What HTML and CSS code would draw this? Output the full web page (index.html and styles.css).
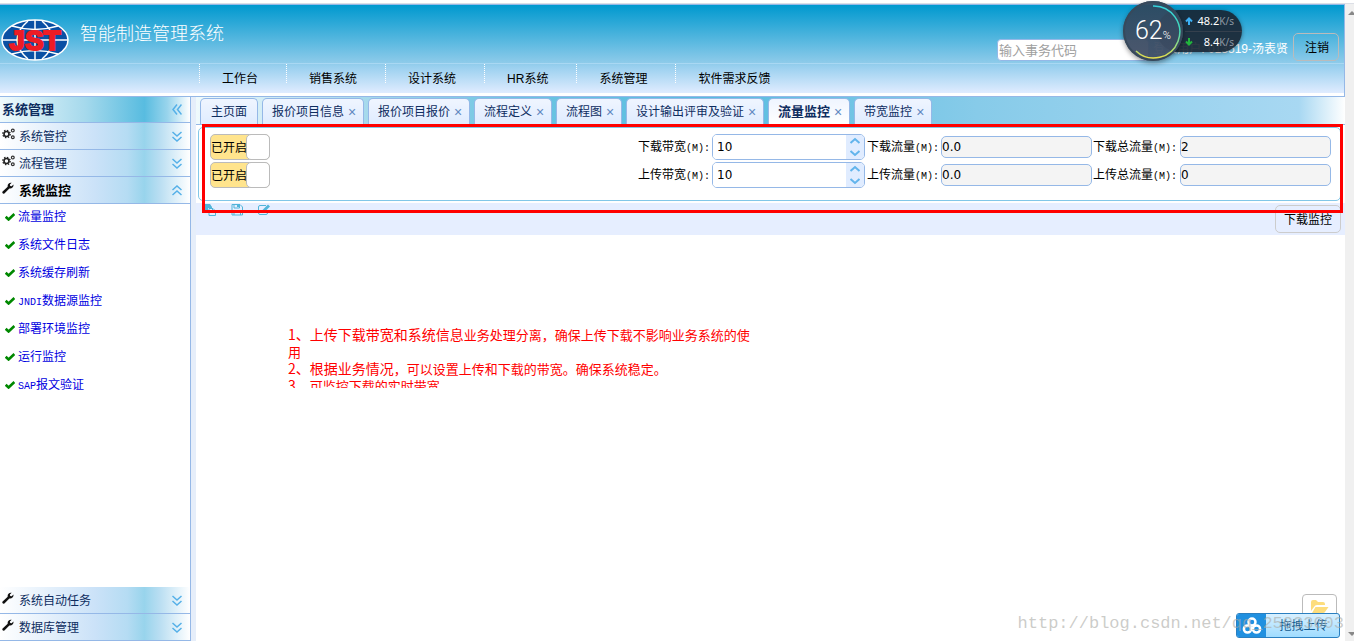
FILE: index.html
```html
<!DOCTYPE html>
<html lang="zh-CN">
<head>
<meta charset="utf-8">
<title>智能制造管理系统</title>
<link rel="stylesheet" href="styles.css">
</head>
<body>
<svg class="defs" width="0" height="0" aria-hidden="true">
  <symbol id="down" viewBox="0 0 10 11"><path d="M0.5 1l4.5 4 4.5-4M0.5 6l4.5 4 4.5-4"/></symbol>
  <symbol id="gears" viewBox="0 0 14 12">
    <circle cx="4.500" cy="6" r="2.500" fill="none" stroke="#222" stroke-width="1.600"/>
    <circle cx="4.500" cy="6" r="3.700" fill="none" stroke="#222" stroke-width="1.300" stroke-dasharray="1.450 1.450"/>
    <circle cx="10.800" cy="2.600" r="1.400" fill="none" stroke="#333" stroke-width="1.200"/>
    <circle cx="10.800" cy="9.200" r="1.400" fill="none" stroke="#333" stroke-width="1.200"/>
  </symbol>
  <symbol id="wrench" viewBox="0 0 12 12"><path fill="#111" d="M.6 9.500L5.700 4.700C5.200 2.300 7 .2 9.700.7L7.900 2.400l.3 1.500 1.500.3 1.700-1.700c.6 2.600-1.600 4.500-4 4L2.400 11.400c-1.300 1-2.800-.7-1.800-1.900z"/></symbol>
  <symbol id="check" viewBox="0 0 10 8"><path d="M.7 3.800l2.900 2.700L9.400 1" fill="none" stroke="#080" stroke-width="2.600"/></symbol>
</svg>
<div class="browser-edge"></div>
<div class="page">
  <div class="app">
    <header class="header">
      <div class="banner">
        <svg class="logo" width="68" height="42" viewBox="0 0 68 42" role="img" aria-label="JST">
          <ellipse cx="34" cy="21" rx="33" ry="20" fill="#0a50a4" stroke="#fff" stroke-width="1.500"/>
          <g fill="none" stroke="#fff" stroke-width="1.500">
            <path d="M34 1v40M1 21h66M11 7q23 7 46 0M11 35q23-7 46 0"/>
            <path d="M27 2Q5 21 27 40M41 2q22 19 0 38"/>
          </g>
          <text class="logo-text" x="34" y="31" text-anchor="middle">JST</text>
        </svg>
        <h1 class="title">智能制造管理系统</h1>
        <div class="account">
          <input class="code" type="text" aria-label="事务代码" placeholder="输入事务代码">
          <span class="user">登录用户: 013519-汤表贤</span>
          <button class="btn logout" type="button">注销</button>
        </div>
      </div>
      <nav class="nav">
        <a href="#">工作台</a><a href="#">销售系统</a><a href="#">设计系统</a><a href="#">HR系统</a><a href="#">系统管理</a><a href="#">软件需求反馈</a>
      </nav>
    </header>
    <div class="body">
      <aside class="sidebar">
        <div class="side-head main-head"><span class="label">系统管理</span><svg class="arrow" width="10" height="11" viewBox="0 0 10 11"><path d="M5 .5l-4 5 4 5M9.500 .5l-4 5 4 5"/></svg></div>
        <div class="side-head"><svg class="ico" width="14" height="12"><use href="#gears"/></svg><span class="label">系统管控</span><svg class="arrow" width="10" height="11"><use href="#down"/></svg></div>
        <div class="side-head"><svg class="ico" width="14" height="12"><use href="#gears"/></svg><span class="label">流程管理</span><svg class="arrow" width="10" height="11"><use href="#down"/></svg></div>
        <div class="side-head open"><svg class="ico" width="14" height="12"><use href="#wrench" width="12"/></svg><span class="label">系统监控</span><svg class="arrow" width="10" height="11" viewBox="0 0 10 11"><path d="M.5 5L5 1l4.500 4M.5 10L5 6l4.500 4"/></svg></div>
        <ul class="links">
          <li><svg width="10" height="8"><use href="#check"/></svg><a href="#">流量监控</a></li>
          <li><svg width="10" height="8"><use href="#check"/></svg><a href="#">系统文件日志</a></li>
          <li><svg width="10" height="8"><use href="#check"/></svg><a href="#">系统缓存刷新</a></li>
          <li><svg width="10" height="8"><use href="#check"/></svg><a href="#"><span class="latin">JNDI</span>数据源监控</a></li>
          <li><svg width="10" height="8"><use href="#check"/></svg><a href="#">部署环境监控</a></li>
          <li><svg width="10" height="8"><use href="#check"/></svg><a href="#">运行监控</a></li>
          <li><svg width="10" height="8"><use href="#check"/></svg><a href="#"><span class="latin">SAP</span>报文验证</a></li>
        </ul>
        <div class="side-head"><svg class="ico" width="14" height="12"><use href="#wrench" width="12"/></svg><span class="label">系统自动任务</span><svg class="arrow" width="10" height="11"><use href="#down"/></svg></div>
        <div class="side-head"><svg class="ico" width="14" height="12"><use href="#wrench" width="12"/></svg><span class="label">数据库管理</span><svg class="arrow" width="10" height="11"><use href="#down"/></svg></div>
      </aside>
      <main class="content">
        <div class="tabs">
          <div class="tab home">主页面</div>
          <div class="tab">报价项目信息<button type="button" aria-label="关闭">×</button></div>
          <div class="tab">报价项目报价<button type="button" aria-label="关闭">×</button></div>
          <div class="tab">流程定义<button type="button" aria-label="关闭">×</button></div>
          <div class="tab">流程图<button type="button" aria-label="关闭">×</button></div>
          <div class="tab">设计输出评审及验证<button type="button" aria-label="关闭">×</button></div>
          <div class="tab active">流量监控<button type="button" aria-label="关闭">×</button></div>
          <div class="tab">带宽监控<button type="button" aria-label="关闭">×</button></div>
        </div>
        <form class="panel">
          <div class="row">
            <button class="switch" type="button" role="switch" aria-checked="true"><span class="on">已开启</span><span class="knob"></span></button>
            <label for="d1">下载带宽<span class="latin">(M):</span></label>
            <div class="spinner"><input id="d1" type="text" value="10"><svg width="18" height="24" viewBox="0 0 18 24"><path d="M4.500 8L9 4l4.500 4M4.500 16L9 20l4.500-4"/></svg></div>
            <label for="d2">下载流量<span class="latin">(M):</span></label><input class="ro" id="d2" type="text" value="0.0" readonly>
            <label for="d3">下载总流量<span class="latin">(M):</span></label><input class="ro" id="d3" type="text" value="2" readonly>
          </div>
          <div class="row">
            <button class="switch" type="button" role="switch" aria-checked="true"><span class="on">已开启</span><span class="knob"></span></button>
            <label for="u1">上传带宽<span class="latin">(M):</span></label>
            <div class="spinner"><input id="u1" type="text" value="10"><svg width="18" height="24" viewBox="0 0 18 24"><path d="M4.500 8L9 4l4.500 4M4.500 16L9 20l4.500-4"/></svg></div>
            <label for="u2">上传流量<span class="latin">(M):</span></label><input class="ro" id="u2" type="text" value="0.0" readonly>
            <label for="u3">上传总流量<span class="latin">(M):</span></label><input class="ro" id="u3" type="text" value="0" readonly>
          </div>
        </form>
        <div class="toolbar">
          <div class="tools">
            <svg width="12" height="12" viewBox="0 0 12 12"><path d="M0 0h6l2 3v1H4v5H0z" fill="#52b5d9"/><path d="M5 4.500h4l2.500 2.500v4.500H5z" fill="#e6eeff" stroke="#52b5d9"/><path d="M8.500 4.500V7H11" fill="none" stroke="#52b5d9"/></svg>
            <svg width="12" height="12" viewBox="0 0 12 12"><path d="M1 .5h8L11.500 3v8H1zM3 .5V4h5.500V.5M3 11V7h6.500v4" fill="none" stroke="#52b5d9"/><path d="M6 1h2v2H6z" fill="#52b5d9"/></svg>
            <svg width="12" height="12" viewBox="0 0 12 12"><path d="M8 1.500H2Q.5 1.500.5 3v6q0 1.500 1.500 1.500h6q1.500 0 1.500-1.500V7" fill="none" stroke="#52b5d9"/><path d="M4.500 6L10 .5 12 2.500 6.500 8h-2z" fill="#52b5d9"/></svg>
          </div>
          <button class="btn monitor" type="button">下载监控</button>
        </div>
        <div class="notes">
          <p><span class="big">1、上传下载带宽和系统信息</span>业务处理分离，确保上传下载不影响业务系统的使用</p>
          <p><span class="big">2、根据业务情况</span>，可以设置上传和下载的带宽。确保系统稳定。</p>
          <p><span class="big">3、</span>可监控下载的实时带宽</p>
        </div>
        <div class="highlight"></div>
      </main>
    </div>
  </div>
  <div class="scrollbar" aria-hidden="true"><span class="up"></span><span class="dn"></span></div>
</div>
<div class="netmeter">
  <div class="rates">
    <div><svg width="8" height="8" viewBox="0 0 8 8"><path d="M4 8V1.500M1 4.500l3-3 3 3" stroke="#3bb0f5"/></svg><span>48.2<small>K/s</small></span></div>
    <div><svg width="8" height="8" viewBox="0 0 8 8"><path d="M4 0v6.500M1 3.500l3 3 3-3" stroke="#22b53c"/></svg><span>8.4<small>K/s</small></span></div>
  </div>
  <div class="dial">
    <svg width="60" height="60" viewBox="0 0 60 60">
      <defs><linearGradient id="arc" x1="0" y1="0" x2="0" y2="1"><stop offset="0" stop-color="#35d3dc"/><stop offset=".5" stop-color="#45d9b4"/><stop offset="1" stop-color="#e8e04a"/></linearGradient></defs>
      <path d="M30 5a26 26 0 1 1-17 45" fill="none" stroke="url(#arc)" stroke-width="1.500"/>
    </svg>
    <span class="pct">62<small>%</small></span>
  </div>
</div>
<button class="folder" type="button" aria-label="打开文件夹"><svg width="18" height="13" viewBox="0 0 18 13"><path d="M0 11V2Q0 0 2 0h3l2 2h5q2 0 2 2v1H6Q4 5 3 7z" fill="#fddd7c"/><path d="M1 13l3.500-6h13L14 12q-.5 1-2 1z" fill="#fddd7c"/></svg></button>
<button class="upload" type="button">
  <span class="cloud"><svg width="20" height="18" viewBox="0 0 20 18"><g fill="none" stroke="#fff" stroke-width="2.500"><circle cx="10" cy="5" r="3.500"/><circle cx="5.500" cy="12" r="3.600"/><circle cx="14.500" cy="12" r="3.600"/></g></svg></span>
  <span class="cap">拖拽上传</span>
</button>
<div class="watermark">http://blog.csdn.net/qq_25033003</div>
</body>
</html>
```
FILE: styles.css
```css
* { box-sizing: border-box; }
body {
  margin: 0;
  height: 100vh;
  display: flex;
  flex-direction: column;
  overflow: hidden;
  background: #fff;
  color: #000;
  font: 12px/16px "Liberation Sans", "Noto Sans CJK SC", sans-serif;
}
button, input { font: inherit; color: inherit; margin: 0; }
a { text-decoration: none; color: inherit; }
.defs { position: absolute; }
.latin { font-family: "Liberation Mono", monospace; font-size: 10px; }
.browser-edge { height: 4px; flex: none; border-bottom: 1px solid #dcdfe6; }
.page { flex: 1; min-height: 0; display: flex; }
.app { flex: 1; min-width: 0; display: flex; flex-direction: column; }

.header {
  border: 1px solid #95b8e7;
  border-left: 0;
  padding-bottom: 3px;
  background: linear-gradient(#0099cf, #8ecbea 58px, #9ad0ef 62px, #e0ecff) content-box;
}
.banner {
  height: 59px;
  display: flex;
  align-items: center;
  border-bottom: 1px solid #a9d8f3;
}
.logo { margin: 12px 11px 0 1px; flex: none; }
.logo-text {
  font: bold 28px "Liberation Sans", sans-serif;
  fill: #ee1c25;
  stroke: #ee1c25;
  stroke-width: 2px;
}
.title {
  margin: 0;
  flex: 1;
  padding-bottom: 5px;
  color: #fff;
  font: 300 18px/24px "Noto Sans CJK SC", sans-serif;
}
.account { display: flex; align-items: flex-end; padding: 26px 5px 0 0; }
.code {
  width: 152px;
  height: 22px;
  padding: 0 1px;
  border: 1px solid #95b8e7;
  border-radius: 4px;
  background: #fff;
  font-size: 13px;
}
.code::placeholder { color: #a0a0a0; opacity: 1; }
.user { width: 144px; padding: 0 5px 4px 0; color: #fff; text-align: right; white-space: nowrap; }
.btn {
  height: 28px;
  padding: 2px 8px 0;
  border: 1px solid #bbb;
  border-radius: 5px;
  background: transparent;
}
.logout { width: 46px; padding-left: 10px; }
.nav { display: flex; height: 29px; padding-left: 199px; }
.nav a {
  padding: 7px 28px 0 23px;
  background: linear-gradient(#fff 50%, transparent 50%) 0 0 / 1px 2px repeat-y;
  height: 19px;
}

.body { flex: 1; min-height: 0; display: flex; margin-bottom: 3px; }
.sidebar { width: 191px; flex: none; display: flex; flex-direction: column; border-right: 1px solid #95b8e7; }
.side-head {
  height: 27px;
  flex: none;
  display: flex;
  align-items: center;
  gap: 3px;
  padding: 0 8px 0 2px;
  border-bottom: 1px solid #95b8e7;
  color: #0e2d5f;
  background: linear-gradient(90deg, #fff, #cbe2f8 50%, #b5dcf3 67%, #98d4ec 76%, #b9def2 84%, #fff);
}
.main-head { height: 26px; font-weight: bold; font-size: 13px; background: linear-gradient(90deg, #f0fafc, #a5d9ec 45%, #58bce0 76%, #98d4ec 88%, #fff); }
.open { color: #000; font-weight: bold; font-size: 13px; }
.label { flex: 1; }
.ico { width: 14px; flex: none; align-self: flex-start; margin-top: 5px; }
.ico + .label { padding-top: 2px; }
.arrow { fill: none; stroke: #55b0e8; stroke-width: 1.5px; }
.links { flex: 1; margin: 0; padding: 0; list-style: none; }
.links li { display: flex; align-items: center; gap: 3px; height: 28px; padding: 0 0 3px 5px; }
.links a { height: 16px; color: #0000e0; }

.content { flex: 1; min-width: 0; position: relative; border-left: 5px solid #e6eefa; }
.tabs {
  display: flex;
  gap: 4px;
  height: 28px;
  padding: 1px 4px 0;
  border-bottom: 1px solid #95b8e7;
  background: linear-gradient(90deg, #f0fafc, #a5d9ec 15%, #6cc4e2 28%, #58bce0 45%, #87cbe9 68%, #a8d8f2 96%, #fff);
}
.tab {
  display: flex;
  align-items: center;
  gap: 4px;
  padding: 0 7px 0 9px;
  border: 1px solid #95b8e7;
  border-bottom: 0;
  border-radius: 5px 5px 0 0;
  background: linear-gradient(#eff5ff, #e0ecff);
  color: #0e2d5f;
  white-space: nowrap;
}
.home { padding: 0 10px; }
.active { background: linear-gradient(#eff5ff, #fff); font-weight: bold; font-size: 13px; }
.tab button { width: 8px; padding: 0; border: 0; background: none; color: #6187bf; font: 14px/16px "Liberation Sans", sans-serif; }

.panel {
  display: flex;
  flex-direction: column;
  gap: 2px;
  margin: 2px 4px 2px 2px;
  padding: 6px 9px 12px 11px;
  border: 1px solid #82c7e8;
  border-radius: 5px;
}
.row { display: flex; align-items: center; }
.row label { width: 75px; padding: 2px 0 0 1px; white-space: nowrap; }
.row label:nth-of-type(3) { width: 88px; }
.switch {
  display: flex;
  width: 60px;
  height: 26px;
  margin-right: auto;
  padding: 0;
  border: 1px solid #bbb;
  border-radius: 5px;
  background: #ffe48d;
}
.on { flex: 1; padding-top: 1px; line-height: 24px; white-space: nowrap; }
.knob { width: 24px; height: 26px; margin: -1px; flex: none; border: 1px solid #bbb; border-radius: 5px; background: #fff; }
.spinner {
  display: flex;
  width: 153px;
  height: 26px;
  border: 1px solid #95b8e7;
  border-radius: 5px;
  overflow: hidden;
}
.spinner input { flex: 1; min-width: 0; border: 0; padding: 0 4px; font: 12px "DejaVu Sans", sans-serif; }
.spinner svg { background: #e0ecff; fill: none; stroke: #62b4ec; stroke-width: 2px; }
.spinner + label { width: 76px; padding-left: 2px; }
.ro {
  width: 151px;
  height: 22px;
  padding: 0;
  border: 1px solid #95b8e7;
  border-radius: 5px;
  background: #f4f4f4;
  font: 12px "DejaVu Sans", sans-serif;
}

.toolbar { display: flex; justify-content: space-between; align-items: center; height: 32px; padding: 0 4px 3px 8px; background: #e6eeff; }
.tools { display: flex; gap: 15px; align-self: flex-start; padding-top: 1px; }
.monitor { margin-top: 3px; border-color: #ccc; white-space: nowrap; }
.notes {
  width: 464px;
  height: 62px;
  margin: 91px 0 0 92px;
  overflow: hidden;
  color: #f00;
  font: 13px/17px "Noto Sans CJK SC", sans-serif;
}
.notes p { margin: 0; }
.big { font-size: 14px; line-height: 16px; }
.highlight { position: absolute; left: 6px; right: 2px; top: 27px; height: 89px; border: 3px solid #f00; pointer-events: none; }

.scrollbar {
  width: 9px;
  flex: none;
  display: flex;
  flex-direction: column;
  justify-content: space-between;
  align-items: flex-end;
  padding: 7px 0 5px;
  margin-bottom: 3px;
  background: #f0f0f0;
  overflow: hidden;
}
.up, .dn { border: 4px solid transparent; margin-right: -2px; }
.up { border-top: 0; border-bottom-color: #888; }
.dn { border-bottom: 0; border-top-color: #888; }

.netmeter { position: absolute; top: 1px; right: 112px; width: 119px; height: 60px; color: #fff; }
.rates {
  position: absolute;
  top: 9px;
  right: 0;
  width: 85px;
  height: 42px;
  padding-left: 28px;
  border-radius: 21px;
  background: rgba(24, 34, 48, 0.9);
  box-shadow: 0 1px 4px rgba(0, 0, 0, 0.4);
  font: 11px/16px "Noto Sans", sans-serif;
}
.rates div { display: flex; align-items: center; justify-content: space-between; height: 21px; padding-right: 8px; }
.rates div + div { border-top: 1px solid #35404d; }
.rates svg { fill: none; stroke-width: 2px; }
.rates small { font-size: 10px; color: #8d97a3; }
.dial {
  position: absolute;
  top: 0;
  left: 0;
  width: 60px;
  height: 60px;
  border-radius: 50%;
  background: linear-gradient(rgba(45, 72, 94, 0.95), rgba(66, 78, 102, 0.95));
  box-shadow: inset 0 0 0 2px #37495b, 0 2px 5px rgba(0, 0, 0, 0.4);
}
.pct { position: absolute; left: 12px; top: 15px; font: 300 25px/30px Roboto, sans-serif; white-space: nowrap; }
.pct small { font-size: 11px; }

.folder {
  position: absolute;
  right: 17px;
  bottom: 22px;
  width: 35px;
  height: 28px;
  padding: 0;
  border: 1px solid #bbb;
  border-radius: 4px;
  background: #fff;
}
.upload {
  position: absolute;
  right: 14px;
  bottom: 6px;
  width: 104px;
  height: 25px;
  display: flex;
  padding: 0;
  border: 1px solid #2a7fc0;
  border-radius: 3px;
  overflow: hidden;
  background: linear-gradient(#d8f0ff, #9fdcff);
  color: #125a90;
}
.cloud { width: 29px; height: 23px; display: grid; place-items: center; background: #2090e0; }
.cap { flex: 1; line-height: 25px; padding-left: 2px; }
.watermark {
  position: absolute;
  right: 10px;
  bottom: 9px;
  color: rgba(170, 170, 165, 0.6);
  font: 17px/22px "Liberation Mono", monospace;
  pointer-events: none;
}
```
